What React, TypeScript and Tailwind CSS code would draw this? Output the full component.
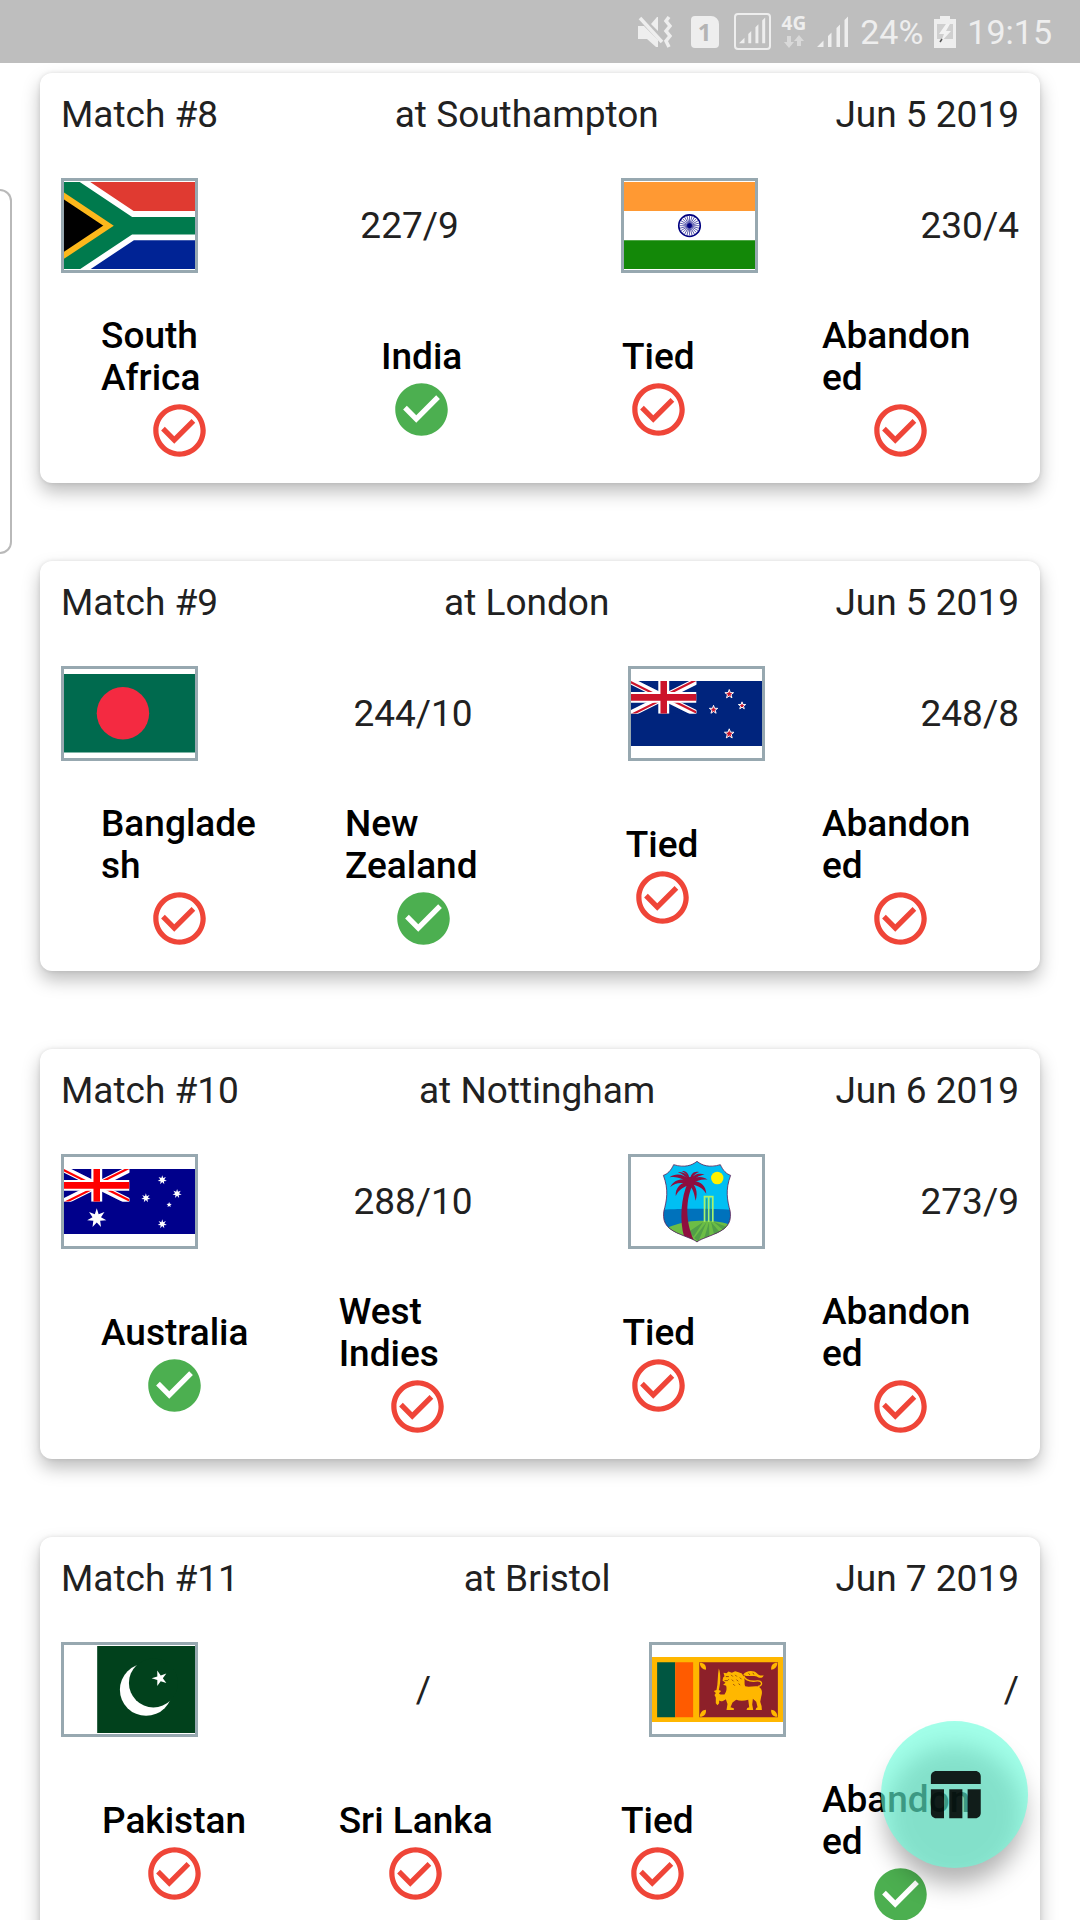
import { useState } from 'react';
import type { ReactNode } from 'react';

type Team =
  | 'South Africa'
  | 'India'
  | 'Bangladesh'
  | 'New Zealand'
  | 'Australia'
  | 'West Indies'
  | 'Pakistan'
  | 'Sri Lanka';

interface Match {
  id: number;
  venue: string;
  date: string;
  teams: [Team, Team];
  scores: [string, string];
  result: string;
}

const MATCHES: Match[] = [
  { id: 8, venue: 'Southampton', date: 'Jun 5 2019', teams: ['South Africa', 'India'], scores: ['227/9', '230/4'], result: 'India' },
  { id: 9, venue: 'London', date: 'Jun 5 2019', teams: ['Bangladesh', 'New Zealand'], scores: ['244/10', '248/8'], result: 'New Zealand' },
  { id: 10, venue: 'Nottingham', date: 'Jun 6 2019', teams: ['Australia', 'West Indies'], scores: ['288/10', '273/9'], result: 'Australia' },
  { id: 11, venue: 'Bristol', date: 'Jun 7 2019', teams: ['Pakistan', 'Sri Lanka'], scores: ['/', '/'], result: 'Abandoned' },
];

// n-pointed star, rot is the angle of the first point (-90deg = up)
function star(cx: number, cy: number, r: number, inner: number, n: number, rot = -Math.PI / 2): string {
  const pts: string[] = [];
  for (let i = 0; i < n * 2; i++) {
    const rad = i % 2 === 0 ? r : inner;
    const a = rot + (i * Math.PI) / n;
    pts.push(`${(cx + rad * Math.cos(a)).toFixed(2)},${(cy + rad * Math.sin(a)).toFixed(2)}`);
  }
  return pts.join(' ');
}

// ── Flags ──────────────────────────────────────────────

function SouthAfricaFlag() {
  return (
    <svg viewBox="0 0 9 6" className="block w-full" aria-hidden="true">
      <clipPath id="za-hoist">
        <path d="M0 0l4.5 3L0 6z" />
      </clipPath>
      <path d="M0 0h9v3H0z" fill="#e03a31" />
      <path d="M0 3h9v3H0z" fill="#002395" />
      <g fill="none" strokeWidth="2">
        <path d="M0 0l4.5 3L0 6M4.5 3H9" stroke="#fff" />
        <path d="M0 0l4.5 3L0 6" fill="#000" stroke="#fcb81c" clipPath="url(#za-hoist)" />
        <path d="M0 0l4.5 3L0 6M4.5 3H9" stroke="#007a4d" strokeWidth="1.2" />
      </g>
    </svg>
  );
}

function IndiaFlag() {
  return (
    <svg viewBox="0 0 900 600" className="block w-full" aria-hidden="true">
      <path d="M0 0h900v200H0z" fill="#ff9933" />
      <path d="M0 200h900v200H0z" fill="#fff" />
      <path d="M0 400h900v200H0z" fill="#138808" />
      <g stroke="#000080" fill="none">
        <circle cx="450" cy="300" r="74" strokeWidth="11" />
        {Array.from({ length: 24 }, (_, i) => (
          <path key={i} d="M450 300V232" strokeWidth="4" transform={`rotate(${i * 15} 450 300)`} />
        ))}
        <circle cx="450" cy="300" r="16" fill="#000080" />
      </g>
    </svg>
  );
}

function BangladeshFlag() {
  return (
    <svg viewBox="0 0 500 300" className="block w-full" aria-hidden="true">
      <path d="M0 0h500v300H0z" fill="#006a4e" />
      <circle cx="225" cy="150" r="100" fill="#f42a41" />
    </svg>
  );
}

function UnionJack({ id, red, blue }: { id: string; red: string; blue: string }) {
  return (
    <g>
      <clipPath id={`${id}-box`}>
        <path d="M0 0h60v30H0z" />
      </clipPath>
      <clipPath id={`${id}-diag`}>
        <path d="M30 15h30v15zv15H0zH0V0zV0h30z" />
      </clipPath>
      <g clipPath={`url(#${id}-box)`}>
        <path d="M0 0h60v30H0z" fill={blue} />
        <path d="M0 0l60 30M60 0L0 30" stroke="#fff" strokeWidth="6" />
        <path d="M0 0l60 30M60 0L0 30" stroke={red} strokeWidth="4" clipPath={`url(#${id}-diag)`} />
        <path d="M30 0v30M0 15h60" stroke="#fff" strokeWidth="10" />
        <path d="M30 0v30M0 15h60" stroke={red} strokeWidth="6" />
      </g>
    </g>
  );
}

function NewZealandFlag() {
  return (
    <svg viewBox="0 0 120 60" className="block w-full" aria-hidden="true">
      <path d="M0 0h120v60H0z" fill="#00247d" />
      <UnionJack id="nz" red="#cc142b" blue="#00247d" />
      <g fill="#cc142b" stroke="#fff" strokeWidth="0.9">
        <polygon points={star(90, 12, 4.2, 1.7, 5)} />
        <polygon points={star(75.6, 26.3, 4, 1.6, 5)} />
        <polygon points={star(101.7, 22.6, 3.5, 1.4, 5)} />
        <polygon points={star(90, 48.4, 4.6, 1.9, 5)} />
      </g>
    </svg>
  );
}

function AustraliaFlag() {
  return (
    <svg viewBox="0 0 120 60" className="block w-full" aria-hidden="true">
      <path d="M0 0h120v60H0z" fill="#00008b" />
      <UnionJack id="au" red="#ff0000" blue="#00008b" />
      <g fill="#fff">
        <polygon points={star(30, 45, 9, 4, 7)} />
        <polygon points={star(90, 10, 4.3, 1.9, 7)} />
        <polygon points={star(75, 26.6, 4.3, 1.9, 7)} />
        <polygon points={star(103.6, 22.6, 4.3, 1.9, 7)} />
        <polygon points={star(96.3, 32.8, 2.5, 1.1, 5)} />
        <polygon points={star(90, 50.4, 4.3, 1.9, 7)} />
      </g>
    </svg>
  );
}

function WestIndiesCrest() {
  const shield =
    'M454 364C440 376 418 384 386 374C378 392 368 402 356 406C372 450 366 480 357 515C352 555 375 570 405 583C430 594 445 598 454 606C463 598 478 594 503 583C533 570 556 555 551 515C542 480 536 450 552 406C540 402 530 392 522 374C490 384 468 376 454 364Z';
  return (
    <svg viewBox="352 360 204 249" preserveAspectRatio="none" className="block h-[83px] w-[70px]" aria-hidden="true">
      <clipPath id="wi-shield">
        <path d={shield} />
      </clipPath>
      <g clipPath="url(#wi-shield)">
        <path d="M350 360h210v150H350z" fill="#00bff3" />
        <path d="M350 510C400 505 500 505 560 510V610H350z" fill="#0072bc" />
        <path d="M370 562C410 545 440 542 474 542C510 542 535 548 556 556V610H370z" fill="#6cbd45" />
        <path d="M472 546L430 575L444 590ZM482 546L446 594L458 604ZM489 546L474 598L490 590ZM495 546L504 585L520 576ZM502 545L530 570L540 560Z" fill="#519f48" />
        <ellipse cx="513" cy="414" rx="18" ry="19" fill="#fff200" />
        <g fill="none" stroke="#a9f26b" strokeWidth="5">
          <path d="M476 545V470H500V545M488 470V545" />
        </g>
        <g stroke="#3a9447" strokeWidth="2">
          <path d="M482 476V544M494 476V544" />
        </g>
        <g fill="#8e0e3f">
          <path d="M427 428C408 470 402 540 417 592L448 606C424 560 416 490 442 432Z" />
          <path d="M432 420C416 402 392 398 374 412C394 408 410 414 428 430Z" />
          <path d="M432 422C408 414 386 420 376 441C392 428 408 426 430 434Z" />
          <path d="M432 424C408 426 390 444 392 468C400 450 412 440 436 434Z" />
          <path d="M430 414C424 400 412 394 398 396C412 402 420 408 428 420Z" />
          <path d="M432 416C430 400 422 392 410 393C422 400 426 408 430 420Z" />
          <path d="M434 418C436 400 446 392 460 396C446 402 442 408 438 422Z" />
          <path d="M434 420C444 402 462 398 476 404C458 406 448 414 440 428Z" />
          <path d="M434 424C448 408 470 408 485 419C466 417 452 422 440 432Z" />
          <path d="M434 426C458 418 480 434 481 461C470 444 458 436 440 434Z" />
          <path d="M434 426C450 434 458 456 450 482C446 462 444 448 430 434Z" />
          <circle cx="434" cy="424" r="13" />
        </g>
      </g>
      <path d={shield} fill="none" stroke="#5b2058" strokeWidth="2.4" />
    </svg>
  );
}

function PakistanFlag() {
  return (
    <svg viewBox="0 0 900 600" className="block w-full" aria-hidden="true">
      <path d="M0 0h228v600H0z" fill="#fff" />
      <path d="M228 0h672v600H228z" fill="#01411c" />
      <circle cx="564" cy="300" r="180" fill="#fff" />
      <circle cx="614" cy="254" r="168" fill="#01411c" />
      <polygon points={star(658, 222, 56, 21, 5, Math.PI)} fill="#fff" />
    </svg>
  );
}

function SriLankaFlag() {
  return (
    <svg viewBox="0 0 120 60" className="block w-full" aria-hidden="true">
      <path d="M0 0h120v60H0z" fill="#ffb700" />
      <path d="M4.7 4.7h16.6v50.6H4.7z" fill="#005641" />
      <path d="M21.3 4.7h16.4v50.6H21.3z" fill="#ff5b00" />
      <path d="M43.3 4.7h72v50.6h-72z" fill="#8d2029" />
      {/* bo leaves in the corners */}
      <g fill="#ffb700">
        <path d="M43.8 5.2C47 5 50 7 49.4 11.6C46.6 11.6 43.6 9 43.8 5.2Z" />
        <path d="M114.8 5.2C111.6 5 108.6 7 109.2 11.6C112 11.6 115 9 114.8 5.2Z" />
        <path d="M43.8 54.8C47 55 50 53 49.4 48.4C46.6 48.4 43.6 51 43.8 54.8Z" />
        <path d="M114.8 54.8C111.6 55 108.6 53 109.2 48.4C112 48.4 115 51 114.8 54.8Z" />
      </g>
      <g transform="scale(.306 .309) translate(-33 -51)" fill="#ffb700">
        <path d="M233 85C240 102 238 130 233 149L240 152L234 158V188L229 194L224 188V158L218 152L226 149C231 130 229 105 233 85Z" />
        <path d="M246 112L250 108L247 98L256 99L262 94L272 98L282 93L292 96L302 100L309 112C312 124 308 132 312 138C326 142 340 135 353 139C363 146 364 156 360 168L357 184L361 196L362 208H343L345 202L349 200L345 184L335 175L333 192L336 208H316L318 202L324 200L321 178C308 182 295 182 285 178L274 186L268 200L278 203V208H256L259 190L254 176C248 181 240 184 235 181L226 174L220 164L226 156L238 162L250 162C257 152 257 144 255 136L246 133L253 127L244 121Z" />
        <path d="M350 138C366 136 364 121 348 122C326 125 312 118 307 107" fill="none" stroke="#ffb700" strokeWidth="4" />
        <path d="M306 104C314 90 338 90 347 99C352 105 360 108 367 105C366 112 358 115 350 111C338 103 322 112 306 104Z" />
        <path d="M254 109h9M250 121h9l4 -4M270 104l5 5M282 104l5 5M272 118l5 5M286 118l5 5M276 131l5 5M296 112l5 5M292 130l5 4M322 99l4 5M335 98l3 5" fill="none" stroke="#6b1a10" strokeWidth="2" />
      </g>
    </svg>
  );
}

const FLAGS: Record<Team, ReactNode> = {
  'South Africa': <SouthAfricaFlag />,
  India: <IndiaFlag />,
  Bangladesh: <BangladeshFlag />,
  'New Zealand': <NewZealandFlag />,
  Australia: <AustraliaFlag />,
  'West Indies': <WestIndiesCrest />,
  Pakistan: <PakistanFlag />,
  'Sri Lanka': <SriLankaFlag />,
};

function FlagBox({ team }: { team: Team }) {
  return (
    <div
      role="img"
      aria-label={team}
      className="flex h-[95px] w-[137px] shrink-0 items-center justify-center overflow-hidden border-3 border-[#97a8b0] bg-white"
    >
      {FLAGS[team]}
    </div>
  );
}

// ── Status bar ─────────────────────────────────────────

function SignalBars({ className }: { className: string }) {
  return (
    <svg viewBox="0 0 32 32" className={className} fill="currentColor" aria-hidden="true">
      <path d="M0 31l6.5-6.5V31zM11 20l3.5-3.5V31H11zM19.5 12L23 8.5V31h-3.5zM27.5 4L31 .5V31h-3.5z" />
    </svg>
  );
}

function StatusBar() {
  return (
    <header className="relative z-10 flex h-[63px] shrink-0 items-center justify-end gap-[11px] bg-[#bebebe] pr-7 text-[#eeeeee]">
      <svg viewBox="0 0 34 32" className="mr-2 h-8 w-[34px]" aria-hidden="true">
        <path d="M0 10h6l14 14v7h-2L9 23H0zM20 1v14l-7-7 6-7z" fill="currentColor" />
        <path d="M2 2l22 24" stroke="currentColor" strokeWidth="3.5" />
        <path d="M31 1l-3 4 4 5-4 5 4 5-4 5 3 6" fill="none" stroke="currentColor" strokeWidth="3.5" />
      </svg>
      <span className="mr-1 flex h-8 w-7 items-center justify-center rounded-sm rounded-tr-lg bg-[#eeeeee] font-['Noto_Sans'] text-2xl font-bold text-[#b4b4b4]">
        1
      </span>
      <span className="flex h-[37px] w-[37px] items-end justify-center rounded-sm border-2 border-[#eeeeee] pb-1">
        <SignalBars className="h-[27px] w-[27px]" />
      </span>
      <span className="flex flex-col items-center gap-1 font-['Noto_Sans'] text-[19px] leading-4 font-bold">
        4G
        <svg viewBox="0 0 20 13" className="h-[13px] w-5" fill="#d9d9d9" aria-hidden="true">
          <path d="M3 1h4v6h3l-5 6-5-6h3zM13 11V6h-3l5-6 5 6h-3v5z" />
        </svg>
      </span>
      <SignalBars className="h-8 w-8" />
      <span className="text-[34px] leading-10">24%</span>
      <svg viewBox="0 0 22 32" className="h-8 w-[22px]" aria-hidden="true">
        <path d="M6 0h10v3h6v29H0V3h6z" fill="currentColor" />
        <path d="M3 8h16v15H3z" fill="#cfcfcf" />
        <path d="M12 8l-7 10h5l-3 8 10-11h-5l4-7z" fill="#f2f2f2" />
        <path d="M8 23l-2 3" stroke="#555" strokeWidth="1.5" />
      </svg>
      <span className="text-[34px] leading-10">19:15</span>
    </header>
  );
}

// ── Match card ─────────────────────────────────────────

interface OutcomeProps {
  label: string;
  selected: boolean;
  onSelect: () => void;
}

function Outcome({ label, selected, onSelect }: OutcomeProps) {
  return (
    <button
      type="button"
      aria-pressed={selected}
      onClick={onSelect}
      className="flex max-w-[157px] min-w-[146px] cursor-pointer flex-col items-center font-medium text-black"
    >
      <span className="max-w-full text-left wrap-anywhere">{label}</span>
      <svg
        viewBox="0 0 24 24"
        fill="currentColor"
        className={selected ? 'h-[63px] w-[63px] text-[#4caf50]' : 'h-[63px] w-[63px] text-[#ef4538]'}
        aria-hidden="true"
      >
        {selected ? (
          <path d="M12 2C6.48 2 2 6.48 2 12s4.48 10 10 10 10-4.48 10-10S17.52 2 12 2zm-2 15l-5-5 1.41-1.41L10 14.17l7.59-7.59L19 8l-9 9z" />
        ) : (
          <path d="M16.59 7.58L10 14.17l-3.59-3.58L5 12l5 5 8-8zM12 2C6.48 2 2 6.48 2 12s4.48 10 10 10 10-4.48 10-10S17.52 2 12 2zm0 18c-4.42 0-8-3.58-8-8s3.58-8 8-8 8 3.58 8 8-3.58 8-8 8z" />
        )}
      </svg>
    </button>
  );
}

function MatchCard({ match }: { match: Match }) {
  const [picked, setPicked] = useState(match.result);
  const [home, away] = match.teams;

  return (
    <article className="flex flex-col gap-[42px] rounded-xl bg-white px-[21px] py-[21px] shadow-[0_0_4px_rgba(0,0,0,0.1),0_9px_18px_rgba(0,0,0,0.26)]">
      <div className="flex justify-between">
        <h2>Match #{match.id}</h2>
        <span>at {match.venue}</span>
        <span>{match.date}</span>
      </div>
      <div className="flex items-center justify-between">
        <FlagBox team={home} />
        <span>{match.scores[0]}</span>
        <FlagBox team={away} />
        <span>{match.scores[1]}</span>
      </div>
      <div className="flex items-center justify-between px-10">
        {[home, away, 'Tied', 'Abandoned'].map((label) => (
          <Outcome key={label} label={label} selected={picked === label} onSelect={() => setPicked(label)} />
        ))}
      </div>
    </article>
  );
}

export default function App() {
  return (
    <div className="relative flex h-screen flex-col overflow-hidden bg-white font-[Roboto,sans-serif] text-[37px] leading-[42px] text-[#212121]">
      <StatusBar />
      <main className="flex flex-1 flex-col gap-[78px] overflow-y-auto px-10 pt-2.5 pb-10 [scrollbar-width:none] *:shrink-0">
        {MATCHES.map((m) => (
          <MatchCard key={m.id} match={m} />
        ))}
      </main>

      {/* edge panel handle */}
      <div className="absolute top-[189px] left-0 h-[365px] w-3 rounded-r-xl border-2 border-l-0 border-[#b9b9b9]" />

      <button
        type="button"
        aria-label="Points table"
        className="absolute right-[52px] bottom-[52px] flex h-[147px] w-[147px] cursor-pointer items-center justify-center rounded-full"
      >
        {/* the fill is translucent, so its shadow has to show through it */}
        <span className="absolute inset-x-1 top-6 -bottom-4 rounded-full bg-black/30 blur-[12px]" />
        <span className="absolute inset-0 rounded-full bg-[#64ffda]/60" />
        <svg viewBox="0 0 24 24" className="relative h-[63px] w-[63px]" fill="#000" fillOpacity="0.87" aria-hidden="true">
          <path d="M10 10.02h5V21h-5zM17 21h3c1.1 0 2-.9 2-2v-9h-5v11zm3-18H5c-1.1 0-2 .9-2 2v3h19V5c0-1.1-.9-2-2-2zM3 19c0 1.1.9 2 2 2h3V10H3v9z" />
        </svg>
      </button>
    </div>
  );
}
